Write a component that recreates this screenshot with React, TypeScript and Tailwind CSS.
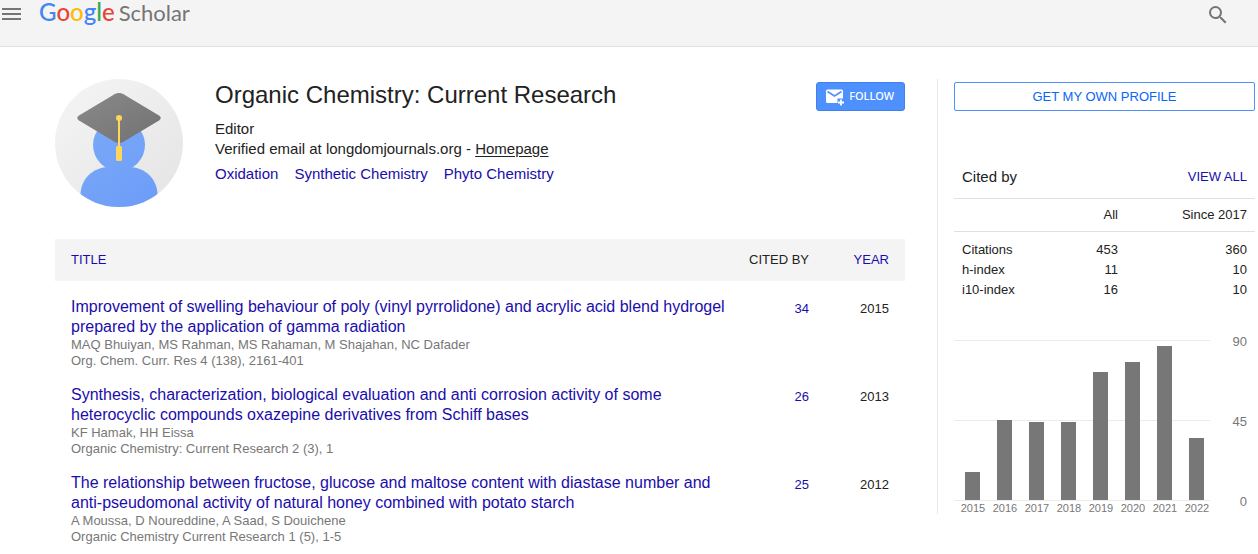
import React from 'react';

const topics = ['Oxidation', 'Synthetic Chemistry', 'Phyto Chemistry'];

const articles = [
  {
    title: 'Improvement of swelling behaviour of poly (vinyl pyrrolidone) and acrylic acid blend hydrogel prepared by the application of gamma radiation',
    authors: 'MAQ Bhuiyan, MS Rahman, MS Rahaman, M Shajahan, NC Dafader',
    source: 'Org. Chem. Curr. Res 4 (138), 2161-401',
    cited: 34,
    year: 2015
  },
  {
    title: 'Synthesis, characterization, biological evaluation and anti corrosion activity of some heterocyclic compounds oxazepine derivatives from Schiff bases',
    authors: 'KF Hamak, HH Eissa',
    source: 'Organic Chemistry: Current Research 2 (3), 1',
    cited: 26,
    year: 2013
  },
  {
    title: 'The relationship between fructose, glucose and maltose content with diastase number and anti-pseudomonal activity of natural honey combined with potato starch',
    authors: 'A Moussa, D Noureddine, A Saad, S Douichene',
    source: 'Organic Chemistry Current Research 1 (5), 1-5',
    cited: 25,
    year: 2012
  }
];

const metrics = [
  { label: 'Citations', all: 453, since: 360 },
  { label: 'h-index', all: 11, since: 10 },
  { label: 'i10-index', all: 16, since: 10 }
];

const citations = [
  { year: 2015, count: 16 },
  { year: 2016, count: 45 },
  { year: 2017, count: 44 },
  { year: 2018, count: 44 },
  { year: 2019, count: 72 },
  { year: 2020, count: 78 },
  { year: 2021, count: 87 },
  { year: 2022, count: 35 }
];

export default function App() {
  return (
    <div className="bg-white text-[#222] font-['Liberation_Sans',Arial,sans-serif] text-[13px]">
      <Header />
      <main className="flex items-start gap-8 pt-8 pl-[55px] pr-[3px]">
        <div className="flex-1 min-w-0">
          <Profile />
          <Articles />
        </div>
        <aside className="w-[318px] shrink-0 border-l border-[#ebebeb] pt-[3px] pl-4">
          <button className="w-full h-[29px] rounded-xs border border-[#4d90fe] text-[#0a66f5]">
            GET MY OWN PROFILE
          </button>
          <CitedBy />
          <Chart />
        </aside>
      </main>
    </div>
  );
}

function Header() {
  return (
    <header className="flex items-start justify-between h-[47px] bg-[#f4f4f4] border-b border-[#e0e0e0] pr-7">
      <div className="flex items-start">
        <button aria-label="Menu" className="flex flex-col gap-[3px] w-[21px] pt-2 pl-0.5">
          <span className="w-full h-0.5 bg-[#757575]" />
          <span className="w-full h-0.5 bg-[#757575]" />
          <span className="w-full h-0.5 bg-[#757575]" />
        </button>
        <a href="#" className="flex items-baseline gap-1 pl-[18px] leading-6 font-['Lato',sans-serif]">
          <span className="text-2xl/6 font-medium">
            <span className="text-[#4285f4]">G</span>
            <span className="text-[#ea4335]">o</span>
            <span className="text-[#fbbc05]">o</span>
            <span className="text-[#4285f4]">g</span>
            <span className="text-[#34a853]">l</span>
            <span className="text-[#ea4335]">e</span>
          </span>
          <span className="text-[22px] text-[#757575]">Scholar</span>
        </a>
      </div>
      <button aria-label="Search" className="pt-[3px]">
        <svg className="w-6 h-6" viewBox="0 0 24 24" fill="#757575">
          <path d="M15.500 14h-.79l-.28-.27A6.471 6.471 0 0 0 16 9.500 6.500 6.500 0 1 0 9.500 16c1.610 0 3.090-.59 4.230-1.570l.27.28v.79l5 4.990L20.490 19l-4.990-5zm-6 0C7.010 14 5 11.990 5 9.500S7.010 5 9.500 5 14 7.010 14 9.500 11.990 14 9.500 14z" />
        </svg>
      </button>
    </header>
  );
}

function Avatar() {
  return (
    <svg className="w-32 h-32 shrink-0" viewBox="0 0 128 128">
      <defs>
        <linearGradient id="disc" x1="0" y1="0" x2="1" y2="1">
          <stop offset="0" stopColor="#f5f5f5" />
          <stop offset="1" stopColor="#e4e4e4" />
        </linearGradient>
        <linearGradient id="person" gradientUnits="userSpaceOnUse" x1="30" y1="30" x2="105" y2="128">
          <stop offset="0" stopColor="#7baaf7" />
          <stop offset="1" stopColor="#6c9cf8" />
        </linearGradient>
        <linearGradient id="cap" x1="0" y1="0" x2="1" y2="1">
          <stop offset="0" stopColor="#8a8a8a" />
          <stop offset="1" stopColor="#717171" />
        </linearGradient>
        <clipPath id="round">
          <circle cx="64" cy="64" r="64" />
        </clipPath>
      </defs>
      <circle cx="64" cy="64" r="64" fill="url(#disc)" />
      <g clipPath="url(#round)" fill="url(#person)">
        <circle cx="64" cy="66" r="26" />
        <path d="M25.500 128V116C25.500 100 38 88 54 88H74C90 88 102.500 100 102.500 116V128Z" />
      </g>
      <path d="M59.500 15.300Q64 12.700 68.500 15.300L104 36.500Q107.500 39 104 41.500L68.500 62.700Q64 65.300 59.500 62.700L24 41.500Q20.500 39 24 36.500Z" fill="url(#cap)" />
      <circle cx="64" cy="39" r="3" fill="#fdd65b" />
      <path d="M63 39h2v28h-2z" fill="#fdd65b" />
      <rect x="61" y="67" width="6" height="15" rx="1.500" fill="#fdd65b" />
    </svg>
  );
}

function Profile() {
  return (
    <section className="flex items-start gap-8 mb-8">
      <Avatar />
      <div className="flex-1 text-[15px] leading-5">
        <h1 className="text-2xl leading-8 mb-2">Organic Chemistry: Current Research</h1>
        <p>Editor</p>
        <p>
          Verified email at longdomjournals.org - <a href="#" className="underline underline-offset-2">Homepage</a>
        </p>
        <div className="flex gap-4 mt-[5px] text-[#1a0dab]">
          {topics.map((topic) => (
            <a key={topic} href="#">{topic}</a>
          ))}
        </div>
      </div>
      <button className="flex items-center gap-1 h-[29px] mt-[3px] pl-2 pr-2.5 rounded-[3px] border border-[#3f82ee] bg-[#4d90fe] text-white text-[11px] font-medium font-['Noto_Sans',sans-serif]">
        <svg className="w-5 h-5" viewBox="0 0 20 20">
          <rect x="1" y="2.500" width="17" height="13.500" rx="1.500" fill="#fff" />
          <path d="M2.500 4.500l7 4.500 7-4.500" fill="none" stroke="#4d90fe" strokeWidth="1.600" />
          <path d="M12.500 11.500h7.500v8h-7.500z" fill="#4d90fe" />
          <path d="M16 12.500v6M13 15.500h6" stroke="#fff" strokeWidth="1.800" />
        </svg>
        FOLLOW
      </button>
    </section>
  );
}

function Articles() {
  return (
    <table className="w-full table-fixed">
      <thead>
        <tr className="h-[42px] bg-[#f4f4f4]">
          <th className="pl-4 text-left font-normal">
            <a href="#" className="text-[#1a0dab]">TITLE</a>
          </th>
          <th className="w-[72px] text-right font-normal">CITED BY</th>
          <th className="w-24 pr-4 text-right font-normal">
            <a href="#" className="text-[#1a0dab]">YEAR</a>
          </th>
        </tr>
      </thead>
      <tbody>
        {articles.map((article) => (
          <tr key={article.title} className="align-top leading-6">
            <td className="pt-4 pl-4 leading-4 text-[#777]">
              <a href="#" className="block text-base leading-5 text-[#1a0dab]">{article.title}</a>
              <p>{article.authors}</p>
              <p>{article.source}</p>
            </td>
            <td className="pt-4 text-right">
              <a href="#" className="text-[#1a0dab]">{article.cited}</a>
            </td>
            <td className="pt-4 pr-4 text-right">{article.year}</td>
          </tr>
        ))}
      </tbody>
    </table>
  );
}

function CitedBy() {
  return (
    <section className="mt-[45px]">
      <div className="flex items-center justify-between h-[43px] px-2 border-b border-[#e0e0e0]">
        <h2 className="text-[15px]">Cited by</h2>
        <a href="#" className="text-[#1a0dab]">VIEW ALL</a>
      </div>
      <table className="w-full table-fixed leading-5">
        <thead>
          <tr className="h-8 border-b border-[#e0e0e0]">
            <td />
            <th className="w-[86px] pr-2 text-right font-normal">All</th>
            <th className="w-[129px] pr-2 text-right font-normal">Since 2017</th>
          </tr>
        </thead>
        <tbody>
          {metrics.map((metric) => (
            <tr key={metric.label} className="first:*:pt-2">
              <td className="pl-2">{metric.label}</td>
              <td className="pr-2 text-right">{metric.all}</td>
              <td className="pr-2 text-right">{metric.since}</td>
            </tr>
          ))}
        </tbody>
      </table>
    </section>
  );
}

function Chart() {
  return (
    <section className="flex items-start justify-between mt-10 pr-2 text-[#777]">
      <div className="w-64">
        <div className="relative h-40">
          {/* Grid lines */}
          <div className="absolute inset-x-0 top-0 h-px bg-[#ebebeb]" />
          <div className="absolute inset-x-0 top-1/2 h-px bg-[#ebebeb]" />
          <div className="absolute inset-x-0 top-full h-px bg-[#ebebeb]" />
          <div className="relative flex items-end h-full gap-[17px] pl-[11px]">
            {citations.map((item) => (
              <div
                key={item.year}
                className="w-[15px] shrink-0 bg-[#777]"
                style={{ height: Math.floor((item.count / 90) * 160) }}
              />
            ))}
          </div>
        </div>
        <div className="flex w-64 -mb-0.5 ml-[3px] text-[11px] leading-4">
          {citations.map((item) => (
            <span key={item.year} className="w-8 text-center">{item.year}</span>
          ))}
        </div>
      </div>
      {/* Axis values */}
      <div className="flex flex-col justify-between h-[180px] -mt-2 -mb-3 text-right leading-5">
        <span>90</span>
        <span>45</span>
        <span>0</span>
      </div>
    </section>
  );
}
